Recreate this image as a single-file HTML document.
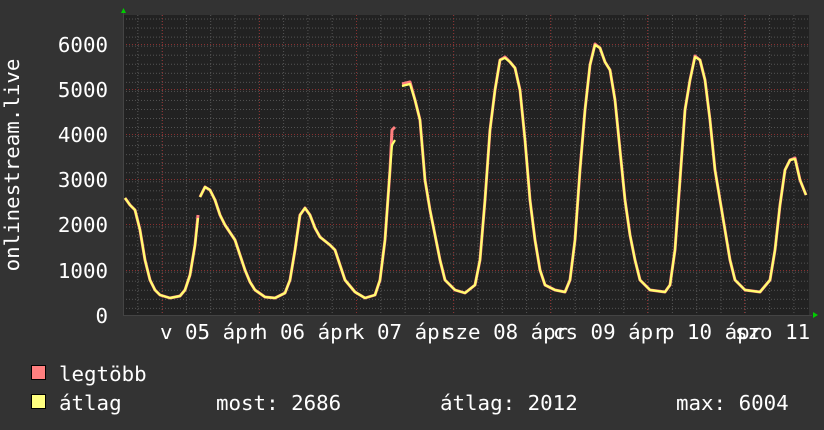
<!DOCTYPE html>
<html><head><meta charset="utf-8"><style>
html,body{margin:0;padding:0;background:#333;}
svg{display:block}
text{font-family:"DejaVu Sans Mono","Liberation Mono",monospace;font-size:20.8px;fill:#fff}
</style></head><body>
<svg width="824" height="430" xmlns="http://www.w3.org/2000/svg">
<rect width="824" height="430" fill="#333"/>
<rect x="123" y="15" width="686" height="300" fill="#222"/>
<defs>
<pattern id="minv" x="113" y="0" width="24.3" height="430" patternUnits="userSpaceOnUse">
<line x1="0.5" y1="0" x2="0.5" y2="430" stroke="#555" stroke-dasharray="1,2"/>
</pattern>
<pattern id="minh" x="0" y="0.5" width="824" height="9.04" patternUnits="userSpaceOnUse">
<line x1="0" y1="0.5" x2="824" y2="0.5" stroke="#555" stroke-dasharray="1,2"/>
</pattern>
</defs>
<g clip-path="url(#pc)">
<clipPath id="pc"><rect x="123" y="15" width="686" height="300"/></clipPath>
<rect x="123" y="15" width="686" height="300" fill="url(#minv)"/>
<rect x="123" y="15" width="686" height="300" fill="url(#minh)"/>
<g stroke="#8a3030" stroke-dasharray="1,2">
<line x1="162.5" y1="15" x2="162.5" y2="315"/><line x1="259.5" y1="15" x2="259.5" y2="315"/>
<line x1="356.5" y1="15" x2="356.5" y2="315"/><line x1="453.5" y1="15" x2="453.5" y2="315"/>
<line x1="550.5" y1="15" x2="550.5" y2="315"/><line x1="647.5" y1="15" x2="647.5" y2="315"/>
<line x1="744.5" y1="15" x2="744.5" y2="315"/>
<line x1="123" y1="44.5" x2="809" y2="44.5"/><line x1="123" y1="89.5" x2="809" y2="89.5"/>
<line x1="123" y1="134.5" x2="809" y2="134.5"/><line x1="123" y1="179.5" x2="809" y2="179.5"/>
<line x1="123" y1="224.5" x2="809" y2="224.5"/><line x1="123" y1="270.5" x2="809" y2="270.5"/>
</g>
</g>
<line x1="123" y1="315.5" x2="812" y2="315.5" stroke="#444"/>
<line x1="123.5" y1="12" x2="123.5" y2="316" stroke="#444"/>
<polygon points="121,13 126,13 123.5,8" fill="#0c0"/>
<polygon points="813,312 813,318 818,315" fill="#0c0"/>
<g fill="none" stroke-linejoin="round">
<g id="c1" stroke="#ff7f7f" stroke-width="3">
<polyline points="125,198 130,205 135,210 140,230 145,260 150,280 155,290 160,295 170,298 180,296 185,290 190,275 195,245 198,215"/>
<polyline points="200,197 205,187 210,190 215,200 220,215 225,225 235,240 240,255 245,270 250,282 255,290 265,297 275,298 285,293 290,280 295,250 300,215 305,208 310,215 315,228 320,237 330,245 335,250 340,265 345,280 355,292 365,298 375,295 380,280 385,240 390,170 392,130 395,127"/>
<polyline points="402,84 410,82 415,100 420,120 425,180 430,210 435,235 440,260 445,280 455,290 465,293 475,285 480,260 485,200 490,130 495,90 500,60 505,57 510,62 515,68 520,90 525,140 530,200 535,240 540,270 545,285 555,290 565,292 570,280 575,240 580,170 585,110 590,65 595,44 600,48 605,62 610,70 615,100 620,150 625,200 630,235 635,260 640,280 650,290 665,292 670,285 675,250 680,180 685,110 690,80 695,56 700,60 705,80 710,120 715,170 720,200 725,230 730,260 735,280 745,290 760,292 770,280 775,250 780,205 785,170 790,160 795,158 800,180 806,195"/>
</g>
<g stroke="#ffff70" stroke-width="2.2">
<polyline points="125,198 130,205 135,210 140,230 145,260 150,280 155,290 160,295 170,298 180,296 185,290 190,275 195,245 198,218"/>
<polyline points="200,197 205,187 210,190 215,200 220,215 225,225 235,240 240,255 245,270 250,282 255,290 265,297 275,298 285,293 290,280 295,250 300,215 305,208 310,215 315,228 320,237 330,245 335,250 340,265 345,280 355,292 365,298 375,295 380,280 385,240 390,170 392,145 395,140"/>
<polyline points="402,86 410,84 415,100 420,120 425,180 430,210 435,235 440,260 445,280 455,290 465,293 475,285 480,260 485,200 490,130 495,90 500,60 505,58 510,62 515,68 520,90 525,140 530,200 535,240 540,270 545,285 555,290 565,292 570,280 575,240 580,170 585,110 590,65 595,45 600,48 605,62 610,70 615,100 620,150 625,200 630,235 635,260 640,280 650,290 665,292 670,285 675,250 680,180 685,110 690,80 695,57 700,60 705,80 710,120 715,170 720,200 725,230 730,260 735,280 745,290 760,292 770,280 775,250 780,205 785,170 790,160 795,159 800,180 806,195"/>
</g>
</g>
<g text-anchor="end">
<text x="108" y="52">6000</text><text x="108" y="97">5000</text><text x="108" y="142">4000</text>
<text x="108" y="187">3000</text><text x="108" y="232">2000</text><text x="108" y="278">1000</text>
<text x="108" y="323">0</text>
</g>
<text transform="translate(19,165) rotate(-90)" text-anchor="middle">onlinestream.live</text>
<text x="160" y="339">v 05 ápr</text>
<text x="255" y="339">h 06 ápr</text>
<text x="352" y="339">k 07 ápr</text>
<text x="443" y="339">sze 08 ápr</text>
<text x="553" y="339">cs 09 ápr</text>
<text x="662" y="339">p 10 ápr</text>
<text x="735" y="339">szo 11</text>
<rect x="31.5" y="365.5" width="14" height="14" fill="#ff7f7f" stroke="#000"/>
<rect x="31.5" y="394.5" width="14" height="14" fill="#ffff7f" stroke="#000"/>
<text x="59" y="381">legtöbb</text>
<text x="59" y="410">átlag</text>
<text x="216" y="410">most: 2686</text>
<text x="440" y="410">átlag: 2012</text>
<text x="676" y="410">max: 6004</text>
</svg>
</body></html>
